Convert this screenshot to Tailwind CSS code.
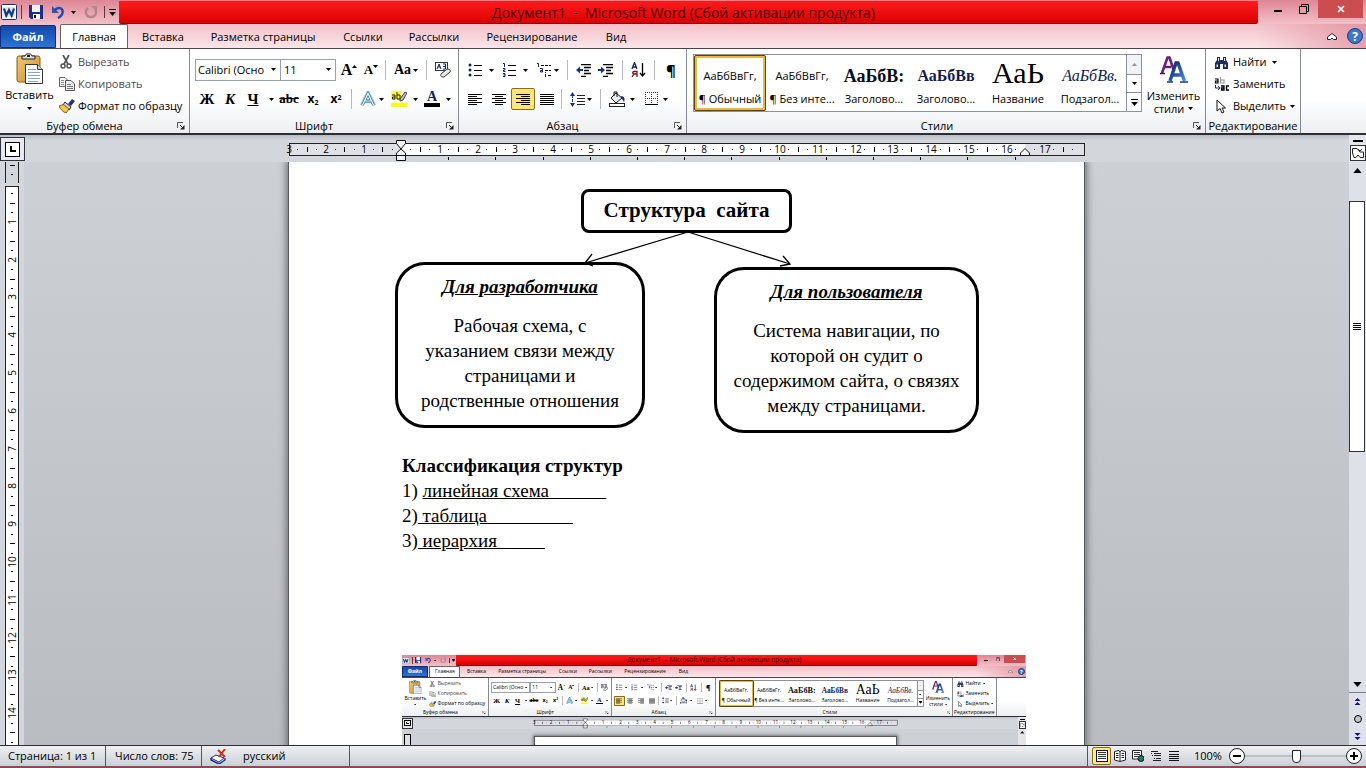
<!DOCTYPE html>
<html lang="ru">
<head>
<meta charset="utf-8">
<title>Документ1 - Microsoft Word</title>
<script src="https://cdn.jsdelivr.net/npm/@tailwindcss/browser@4"></script>
</head>
<body class="flex h-screen flex-col overflow-hidden bg-[#cdd0d4] font-['Open_Sans','Noto_Sans',sans-serif] text-[11px] leading-4 text-black">

<svg width="0" height="0" class="absolute" aria-hidden="true">
  <defs>
    <linearGradient id="gBlue" x1="0" y1="0" x2="1" y2="1"><stop offset="0" stop-color="#0b1f5c"/><stop offset="1" stop-color="#4a8be0"/></linearGradient>
    <linearGradient id="gGold" x1="0" y1="0" x2="1" y2="1"><stop offset="0" stop-color="#f0c877"/><stop offset="1" stop-color="#c98f35"/></linearGradient>
    <symbol id="dd" viewBox="0 0 5 3"><path d="M0 0H5L2.500 3Z" fill="#000"/></symbol>
    <symbol id="launch" viewBox="0 0 8 8"><path d="M.5 6V.5H6" fill="none" stroke="#555"/><path d="M3 3L6 6" stroke="#222"/><path d="M7.500 3V7.500H3Z" fill="#222"/></symbol>
    <symbol id="word" viewBox="0 0 16 16"><rect x=".5" y=".5" width="15" height="15" rx="1" fill="#fff" stroke="#14306e"/><path d="M2 3H14V13H2Z" fill="#dfe8f8"/><path d="M3 4.500L5.300 11.500L8 6L10.700 11.500L13 4.500" fill="none" stroke="#14387f" stroke-width="2.200"/></symbol>
    <symbol id="save" viewBox="0 0 14 14"><path d="M0 0H14V14H2L0 12Z" fill="#1c2f86"/><path d="M3 0H11V7H3Z" fill="#eef2ff"/><path d="M4 9H11V14H4Z" fill="#fff"/><path d="M5 10H7V13H5Z" fill="#111"/></symbol>
    <symbol id="undo" viewBox="0 0 14 14"><path d="M1 1V8H8L5 5Z" fill="#2d55b5"/><path d="M3.500 5.500C7 1 12.500 3 11.500 8C11 10 9 12 7 13" fill="none" stroke="#2449a8" stroke-width="2.400"/></symbol>
    <symbol id="redo" viewBox="0 0 14 14"><path d="M4 3C0 6 2 12 7 12C12 12 13 7 11 4" fill="none" stroke="#b0868e" stroke-width="2.400"/><path d="M7 1H13V7Z" fill="#b0868e"/></symbol>
    <symbol id="paste" viewBox="0 0 28 32"><rect x="1" y="3" width="23" height="26" rx="2" fill="url(#gGold)" stroke="#8a5d16"/><path d="M6 6V3H9C9 0 16 0 16 3H19V6Z" fill="#ddd" stroke="#222"/><rect x="11" y="2" width="3" height="2" fill="#222"/><path d="M9.500 11.500H21.500L26.500 16.500V30.500H9.500Z" fill="#fff" stroke="#333"/><path d="M21.500 11.500V16.500H26.500" fill="#cbd5e8" stroke="#333"/><path d="M12 16.500H20M12 19.500H24M12 22.500H24M12 25.500H24M12 28.500H22" stroke="#8ea0bf"/></symbol>
    <symbol id="cut" viewBox="0 0 14 14"><path d="M4 0L9 9M10 0L5 9" stroke="#555" stroke-width="1.700"/><circle cx="4" cy="11" r="2" fill="none" stroke="#555" stroke-width="1.500"/><circle cx="10" cy="11" r="2" fill="none" stroke="#555" stroke-width="1.500"/></symbol>
    <symbol id="copy" viewBox="0 0 16 14"><path d="M.5.5H6L9 3.500V9.500H.5Z" fill="#fff" stroke="#666"/><path d="M2 3.500H5M2 5.500H5M2 7.500H5" stroke="#888"/><path d="M6.500 3.500H12L15.500 7V13.500H6.500Z" fill="#eee" stroke="#555"/><path d="M8 7.500H12M8 9.500H14M8 11.500H14" stroke="#777"/></symbol>
    <symbol id="brush" viewBox="0 0 16 14"><path d="M9 5L13 0L16 2L12 7Z" fill="#24346e"/><path d="M6 3L12 8L10 11L4 6Z" fill="#cfd3da" stroke="#222"/><path d="M0 7L4.500 5.500L10 10L7 14C4 13 1 10 0 7Z" fill="#f3c64c" stroke="#5a4209" stroke-width=".8"/></symbol>
    <symbol id="bullets" viewBox="0 0 15 14"><g fill="#10205a"><circle cx="2" cy="2" r="1.500"/><circle cx="2" cy="7" r="1.500"/><circle cx="2" cy="12" r="1.500"/></g><path d="M6 2.500H14M6 7.500H14M6 12.500H14" stroke="#000"/></symbol>
    <symbol id="nums" viewBox="0 0 15 14"><g fill="none" stroke="#10205a"><path d="M1 .5H2.500V4M1 5.500H3V7H1.500V8.500H3.500M1 10.500H3V13.500H1M1.500 12H3"/></g><path d="M6 2.500H14M6 7.500H14M6 12.500H14" stroke="#000"/></symbol>
    <symbol id="multi" viewBox="0 0 16 14"><path d="M1 .5H2.500V4M4 5.500H6.500V9M6.500 7.500H4.500V9H6.500M9.500 9V10M9.500 11V14" fill="none" stroke="#10205a"/><path d="M5 2.500H15M9 7.500H15M12 12.500H15" stroke="#000" stroke-dasharray="3 1"/></symbol>
    <symbol id="dedent" viewBox="0 0 16 13"><path d="M5 .5H15M8 3.500H15M8 6.500H13M8 9.500H15M5 12.500H10" stroke="#000" stroke-width="1.400"/><path d="M0 6L4 2.500V5H7V7H4V9.500Z" fill="#1b2f83"/></symbol>
    <symbol id="indent" viewBox="0 0 16 13"><path d="M5 .5H15M8 3.500H15M8 6.500H13M8 9.500H15M5 12.500H10" stroke="#000" stroke-width="1.400"/><path d="M7 6L3 2.500V5H0V7H3V9.500Z" fill="#1b2f83"/></symbol>
    <symbol id="sort" viewBox="0 0 15 16"><path d="M1 7L3.500 0.500L6 7M2 5H5" fill="none" stroke="#10205a" stroke-width="1.300"/><path d="M6 15V9.500H3C1 10 1.500 12 3 12H6M3 12L1 15" fill="none" stroke="#6b1414" stroke-width="1.300"/><path d="M11.500 1V14M9 11L11.500 14L14 11" fill="none" stroke="#000" stroke-width="1.300"/></symbol>
    <symbol id="left" viewBox="0 0 14 13"><path d="M0 1.500H14M0 3.500H9M0 5.500H14M0 7.500H9M0 9.500H14M0 11.500H9" stroke="#000"/></symbol>
    <symbol id="center" viewBox="0 0 14 13"><path d="M0 1.500H14M3 3.500H11M0 5.500H14M3 7.500H11M0 9.500H14M3 11.500H11" stroke="#000"/></symbol>
    <symbol id="right" viewBox="0 0 14 13"><path d="M0 1.500H14M5 3.500H14M0 5.500H14M5 7.500H14M0 9.500H14M5 11.500H14" stroke="#000"/></symbol>
    <symbol id="just" viewBox="0 0 14 13"><path d="M0 1.500H14M0 3.500H14M0 5.500H14M0 7.500H14M0 9.500H14M0 11.500H14" stroke="#000"/></symbol>
    <symbol id="spacing" viewBox="0 0 15 15"><path d="M0 4L2.500 0L5 4ZM0 11L2.500 15L5 11Z" fill="#1b2f83"/><path d="M2.500 3V12" stroke="#1b2f83" stroke-dasharray="3 1"/><path d="M7 3.500H15M7 6.500H15M7 9.500H15M7 12.500H15" stroke="#222"/></symbol>
    <symbol id="fill" viewBox="0 0 16 16"><path d="M7 2L13 7L7 12L2 7Z" fill="#e8ecf5" stroke="#111"/><path d="M5 5V1H8V6" fill="none" stroke="#111"/><path d="M12 5C16 5 16 9 15 11L13 8Z" fill="#1b2f83"/><rect x=".5" y="12.500" width="15" height="3" fill="#fff" stroke="#222"/></symbol>
    <symbol id="borders" viewBox="0 0 14 14"><path d="M.5 0V12M6.500 0V12M12.500 0V12M0 .5H13M0 6.500H13" stroke="#333" stroke-dasharray="1 1"/><path d="M0 12.500H13" stroke="#000"/></symbol>
    <symbol id="eraser" viewBox="0 0 16 16"><rect x=".5" y=".5" width="12" height="8" fill="#fff" stroke="#333"/><path d="M2 7L4 2L6 7M3 5H5M8 2H10.500V7H8M8 4.500H10.500" fill="none" stroke="#10205a"/><path d="M6 12L12 7C15 7 16 9 15 10L9 15C6 15 5 14 6 12Z" fill="#e7ebf5" stroke="#333"/></symbol>
    <symbol id="glowA" viewBox="0 0 16 15"><path d="M1.500 14L8 1L14.500 14M4.500 10H11.500" fill="none" stroke="#a9d0e6" stroke-width="3.600"/><path d="M2.500 13.500L8 2L13.500 13.500M5 9.500H11" fill="none" stroke="#2f6f9f" stroke-width="2.800"/><path d="M2.500 13.500L8 2L13.500 13.500M5 9.500H11" fill="none" stroke="#fff" stroke-width="1.200"/></symbol>
    <symbol id="marker" viewBox="0 0 16 16"><rect x="0" y="0" width="10" height="9" fill="#ffff40"/><path d="M1 4H4V8H1.500V6H4M6 1V8H9V4H6" fill="none" stroke="#222"/><path d="M9 8L14 1L16 2L12 9L9 10Z" fill="#b9bfce" stroke="#222" stroke-width=".8"/><rect x="0" y="12" width="16" height="4" fill="#ff0"/></symbol>
    <symbol id="styles" viewBox="0 0 28 27"><path d="M2 17L7.500 1.500H9.500L14 15M4 11H11" fill="none" stroke="#6b1e78" stroke-width="2.600"/><path d="M0 17.500H5" stroke="#4a1054" stroke-width="1.500"/><path d="M10 25L16 7H18L24.500 25M12 19H21" fill="none" stroke="url(#gBlue)" stroke-width="3.400"/><path d="M7 26H13M20 26H28" stroke="#163b80" stroke-width="1.500"/></symbol>
    <symbol id="find" viewBox="0 0 15 13"><path d="M3 1H6V4H9V1H12V4L14 7V13H9V8H6V13H1V7L3 4Z" fill="#1d2c5a"/><path d="M4 2H5V5H4ZM10 2H11V5H10ZM2.500 8.500H4V11H2.500ZM10.500 8.500H12V11H10.500Z" fill="#dfe6f5"/></symbol>
    <symbol id="replace" viewBox="0 0 16 14"><path d="M1 2H4V6H1.500V4H4" fill="none" stroke="#000" stroke-width="1.200"/><path d="M6.500 0V6H10V3H7" fill="none" stroke="#999" stroke-width="1.200"/><path d="M1.500 8V11H5M4 9L6 11L4 13" fill="none" stroke="#1b2f83"/><path d="M7 9H10V13H7.500V11H10M15 9H12.500V13H15" fill="none" stroke="#000" stroke-width="1.300"/></symbol>
    <symbol id="cursor" viewBox="0 0 10 15"><path d="M1 1V12L4 9.500L6 14L8 13L6 9H9.500Z" fill="#fff" stroke="#111"/></symbol>
    <symbol id="viewPrint" viewBox="0 0 12 12"><rect x=".5" y=".5" width="11" height="11" fill="#fff" stroke="#111"/><path d="M2 2.500H10M2 4.500H10M2 6.500H10M2 8.500H10" stroke="#333"/></symbol>
    <symbol id="viewRead" viewBox="0 0 12 12"><path d="M.5 1.500L5 .5L6 2L7 .5L11.500 1.500V10L6 11.500L.5 10Z" fill="#fff" stroke="#222"/><path d="M6 2V11M2 3.500H4.500M2 5.500H4.500M2 7.500H4.500M7.500 3.500H10M7.500 5.500H10M7.500 7.500H10" stroke="#222"/></symbol>
    <symbol id="viewWeb" viewBox="0 0 12 12"><path d="M.5.5H9.500V9H.5Z" fill="#fff" stroke="#222"/><path d="M2 2.500H8M2 4.500H8M2 6.500H6" stroke="#333"/><circle cx="9" cy="8.500" r="3" fill="#1c7a74" stroke="#111"/></symbol>
    <symbol id="viewOutline" viewBox="0 0 12 12"><path d="M1 1.500H8M4 3.500H11M4 5.500H11M6 8.500H11M3 10.500H11" stroke="#222"/><path d="M1 3.500H2M2 5.500H3M4 8.500H5" stroke="#222"/></symbol>
    <symbol id="viewDraft" viewBox="0 0 12 12"><path d="M1 1.500H11M1 4.500H11M1 6.500H11M1 8.500H11M1 10.500H11" stroke="#111"/></symbol>
    <symbol id="proof" viewBox="0 0 17 15"><path d="M1 9L6 6L14 9L9 13Z" fill="#fff" stroke="#1b2f83"/><path d="M1 9V11L9 15L15 11V9" fill="none" stroke="#1b2f83" stroke-width="1.400"/><path d="M8 1L15 8M15 0L9 8" stroke="#c5331f" stroke-width="2"/></symbol>
  </defs>
</svg>

<!-- Window frame, tabs and ribbon -->
<div id="chrome" class="flex-none">
  <header class="bg-linear-to-b from-[#dd8695] via-[#f3c0c8] to-[#fbe6e9]">
    <div class="flex h-6 items-start">
      <div class="flex h-6 w-[119px] flex-none items-center pl-px">
        <svg class="h-4 w-4"><use href="#word"/></svg>
        <i class="mx-1 h-3.5 w-px bg-[#5a3a40]"></i>
        <button aria-label="Сохранить" class="ml-[3px]"><svg class="h-3.5 w-3.5"><use href="#save"/></svg></button>
        <button aria-label="Отменить" class="ml-2"><svg class="h-3.5 w-3.5"><use href="#undo"/></svg></button>
        <button aria-label="Список отмены" class="ml-1.5"><svg class="h-[3px] w-[5px]"><use href="#dd"/></svg></button>
        <button aria-label="Повторить" class="ml-2"><svg class="h-3.5 w-3.5"><use href="#redo"/></svg></button>
        <i class="ml-1.5 h-3 w-px bg-[#5a3a40]"></i>
        <button aria-label="Настройка панели" class="ml-1 flex flex-col items-center gap-0.5"><i class="h-px w-[7px] bg-black"></i><svg class="h-1 w-[7px]"><use href="#dd"/></svg></button>
      </div>
      <h1 class="mt-px h-[23px] flex-1 rounded-b-xs border-b border-[#7a1010] bg-linear-to-b from-[#ff1a1a] to-[#da0000] pr-2.5 text-center text-[14px] leading-6 text-[#4c0000]">Документ1&nbsp; -&nbsp; Microsoft Word (Сбой активации продукта)</h1>
      <div class="flex h-[18px] w-[108px] flex-none">
        <button aria-label="Свернуть" class="grid w-8 place-items-center pt-1 pl-2"><i class="h-0.5 w-2 bg-black"></i></button>
        <button aria-label="Восстановить" class="grid w-[28px] place-items-center"><svg class="h-2.5 w-2.5" viewBox="0 0 10 10"><path d="M.5 2.500H7.500V9.500H.5ZM2.500 2V.5H9.500V7.500H8" fill="none" stroke="#000"/></svg></button>
        <button aria-label="Закрыть" class="grid flex-1 place-items-center bg-[#cc4d50]"><svg class="h-2 w-2" viewBox="0 0 8 8"><path d="M1 1L7 7M7 1L1 7" stroke="#fff" stroke-width="1.700"/></svg></button>
        <i class="w-[3px]"></i>
      </div>
    </div>
    <nav class="flex h-6 items-end bg-linear-to-r from-transparent from-92% to-[#dd8695]/70">
      <button class="h-[23px] w-14 rounded-t-xs border border-[#0c2d78] bg-linear-to-b from-[#164aa8] via-[#1d5cc0] to-[#2f74d8] text-center font-bold text-white">Файл</button>
      <button class="relative z-10 ml-1 h-6 w-[68px] rounded-t-xs border border-b-0 border-[#6d6065] bg-white text-center">Главная</button>
      <button class="h-[23px] w-[70px]">Вставка</button>
      <button class="h-[23px] w-[130px]">Разметка страницы</button>
      <button class="h-[23px] w-[70px]">Ссылки</button>
      <button class="h-[23px] w-[72px]">Рассылки</button>
      <button class="h-[23px] w-[124px]">Рецензирование</button>
      <button class="h-[23px] w-11">Вид</button>
      <div class="ml-auto flex h-6 items-center gap-2.5 pr-[3px]">
        <button aria-label="Свернуть ленту"><svg class="h-[7px] w-2.5" viewBox="0 0 10 7"><path d="M.5 4L5 .5L9.500 4V6.500H6.500L5 5L3.500 6.500H.5Z" fill="#fff" stroke="#222"/></svg></button>
        <button aria-label="Справка" class="grid h-4 w-4 place-items-center rounded-full border border-[#123f86] bg-[#3b78cc] text-[12px] font-bold text-white">?</button>
      </div>
    </nav>
  </header>

  <div class="flex h-[87px] border-t border-b-2 border-t-[#4b4347] border-b-[#2c2e35] bg-linear-to-b from-white via-white via-60% to-[#eceef1]">
    <!-- Буфер обмена -->
    <section class="flex w-[190px] flex-none flex-col border-r border-[#858a92]">
      <div class="flex h-[70px]">
        <button class="flex w-[59px] flex-none flex-col items-center pt-1">
          <svg class="h-8 w-7"><use href="#paste"/></svg>
          <span class="mt-0.5 leading-4">Вставить</span>
          <svg class="mt-1 h-[3px] w-[5px]"><use href="#dd"/></svg>
        </button>
        <div class="flex flex-col pt-0.5 whitespace-nowrap">
          <button class="flex h-[22px] items-center gap-[5px] text-[#4b4b50]"><svg class="h-3.5 w-3.5"><use href="#cut"/></svg>Вырезать</button>
          <button class="flex h-[22px] items-center gap-[3px] text-[#4b4b50]"><svg class="h-3.5 w-4"><use href="#copy"/></svg>Копировать</button>
          <button class="flex h-[22px] items-center gap-[3px]"><svg class="h-3.5 w-4"><use href="#brush"/></svg>Формат по образцу</button>
        </div>
      </div>
      <div class="flex h-[14px] items-center pr-1"><span class="flex-1 pr-2 text-center">Буфер обмена</span><button aria-label="Параметры буфера обмена"><svg class="h-2 w-2"><use href="#launch"/></svg></button></div>
    </section>
    <!-- Шрифт -->
    <section class="flex w-[269px] flex-none flex-col border-r border-[#858a92]">
      <div class="flex h-[70px] flex-col gap-[7px] pt-2.5 pl-[5px]">
        <div class="flex h-[22px] items-center">
          <div class="relative h-[22px] w-[86px] border border-[#9aa0a8] bg-white"><select aria-label="Шрифт" class="h-5 w-[70px] appearance-none overflow-hidden pl-0.5 whitespace-nowrap outline-none"><option>Calibri (Осно</option></select><svg class="pointer-events-none absolute top-2 right-1 h-[3px] w-[5px]"><use href="#dd"/></svg></div>
          <div class="relative -ml-px h-[22px] w-[56px] border border-[#9aa0a8] bg-white"><select aria-label="Размер шрифта" class="h-5 w-full appearance-none pl-[3px] outline-none"><option>11</option></select><svg class="pointer-events-none absolute top-2 right-1 h-[3px] w-[5px]"><use href="#dd"/></svg></div>
          <button aria-label="Увеличить размер" class="ml-[3px] flex w-5 items-center justify-center font-['Liberation_Serif',serif] text-[16px] font-bold">A<svg class="mb-2 h-[3px] w-[5px] rotate-180"><use href="#dd"/></svg></button>
          <button aria-label="Уменьшить размер" class="ml-0.5 flex w-5 items-center justify-center font-['Liberation_Serif',serif] text-[13px] font-bold">A<svg class="mb-2 h-[3px] w-[5px]"><use href="#dd"/></svg></button>
          <i class="ml-1 h-5 w-px bg-[#b6bac0]"></i>
          <button aria-label="Регистр" class="ml-2 flex items-center gap-0.5 font-['Liberation_Serif',serif] text-[14px] font-bold">Aa<svg class="h-[3px] w-[5px]"><use href="#dd"/></svg></button>
          <i class="ml-2 h-5 w-px bg-[#b6bac0]"></i>
          <button aria-label="Очистить формат" class="ml-2"><svg class="h-4 w-4"><use href="#eraser"/></svg></button>
        </div>
        <div class="flex h-[22px] items-center font-['Liberation_Serif',serif] text-[15px] font-bold">
          <button class="w-6">Ж</button>
          <button class="w-[22px] italic">К</button>
          <button class="w-6 underline">Ч</button>
          <button aria-label="Вид подчёркивания" class="grid w-3 place-items-center"><svg class="h-[3px] w-[5px]"><use href="#dd"/></svg></button>
          <button class="w-6 text-[13px] line-through">abc</button>
          <button class="w-6 font-['Open_Sans',sans-serif] text-[12px]">x<sub class="text-[7px]">2</sub></button>
          <button class="w-[22px] font-['Open_Sans',sans-serif] text-[12px]">x<sup class="text-[7px]">2</sup></button>
          <i class="mx-1 h-5 w-px bg-[#b6bac0]"></i>
          <button aria-label="Эффекты текста" class="ml-1 flex items-center gap-[3px]"><svg class="h-4 w-4"><use href="#glowA"/></svg><svg class="h-[3px] w-[5px]"><use href="#dd"/></svg></button>
          <button aria-label="Выделение цветом" class="ml-[7px] flex items-center gap-1.5"><svg class="h-4 w-4"><use href="#marker"/></svg><svg class="h-[3px] w-[5px]"><use href="#dd"/></svg></button>
          <button aria-label="Цвет текста" class="ml-1.5 flex items-center gap-1.5"><span class="flex h-4 w-4 items-center justify-center border-b-4 border-black text-[14px] leading-3 text-[#10205a]">A</span><svg class="h-[3px] w-[5px]"><use href="#dd"/></svg></button>
        </div>
      </div>
      <div class="flex h-[14px] items-center pr-1"><span class="flex-1 pr-2 text-center">Шрифт</span><button aria-label="Параметры шрифта"><svg class="h-2 w-2"><use href="#launch"/></svg></button></div>
    </section>
    <!-- Абзац -->
    <section class="flex w-[228px] flex-none flex-col border-r border-[#858a92]">
      <div class="flex h-[70px] flex-col gap-[7px] pt-2.5 pl-1">
        <div class="flex h-[22px] items-center pl-[5px]">
          <button aria-label="Маркеры" class="flex items-center gap-1.5"><svg class="h-3.5 w-[15px]"><use href="#bullets"/></svg><svg class="h-[3px] w-[5px]"><use href="#dd"/></svg></button>
          <button aria-label="Нумерация" class="ml-2 flex items-center gap-1.5"><svg class="h-3.5 w-[15px]"><use href="#nums"/></svg><svg class="h-[3px] w-[5px]"><use href="#dd"/></svg></button>
          <button aria-label="Многоуровневый список" class="ml-2 flex items-center gap-0.5"><svg class="h-3.5 w-4"><use href="#multi"/></svg><svg class="h-[3px] w-[5px]"><use href="#dd"/></svg></button>
          <i class="ml-2 h-5 w-px bg-[#b6bac0]"></i>
          <button aria-label="Уменьшить отступ" class="ml-2"><svg class="h-[13px] w-4"><use href="#dedent"/></svg></button>
          <button aria-label="Увеличить отступ" class="ml-1.5"><svg class="h-[13px] w-4"><use href="#indent"/></svg></button>
          <i class="ml-2 h-5 w-px bg-[#b6bac0]"></i>
          <button aria-label="Сортировка" class="ml-2"><svg class="h-4 w-[15px]"><use href="#sort"/></svg></button>
          <i class="ml-2 h-5 w-px bg-[#b6bac0]"></i>
          <button class="ml-[11px] text-[15px] font-bold">¶</button>
        </div>
        <div class="flex h-[22px] items-center">
          <button data-align="left" aria-label="По левому краю" class="grid h-[22px] w-6 place-items-center"><svg class="h-[13px] w-3.5"><use href="#left"/></svg></button>
          <button aria-label="По центру" class="grid h-[22px] w-6 place-items-center"><svg class="h-[13px] w-3.5"><use href="#center"/></svg></button>
          <button data-align="right" aria-label="По правому краю" class="grid h-[22px] w-6 place-items-center rounded-xs border border-[#8a6a1c] bg-[#ffe678]"><svg class="h-[13px] w-3.5"><use href="#right"/></svg></button>
          <button aria-label="По ширине" class="grid h-[22px] w-6 place-items-center"><svg class="h-[13px] w-3.5"><use href="#just"/></svg></button>
          <i class="ml-0.5 h-5 w-px bg-[#b6bac0]"></i>
          <button aria-label="Интервал" class="ml-2 flex items-center gap-0.5"><svg class="h-[15px] w-[15px]"><use href="#spacing"/></svg><svg class="h-[3px] w-[5px]"><use href="#dd"/></svg></button>
          <i class="ml-2 h-5 w-px bg-[#b6bac0]"></i>
          <button aria-label="Заливка" class="ml-2 flex items-center gap-[5px]"><svg class="h-4 w-4"><use href="#fill"/></svg><svg class="h-[3px] w-[5px]"><use href="#dd"/></svg></button>
          <button aria-label="Границы" class="ml-2.5 flex items-center gap-1"><svg class="h-3.5 w-3.5"><use href="#borders"/></svg><svg class="h-[3px] w-[5px]"><use href="#dd"/></svg></button>
        </div>
      </div>
      <div class="flex h-[14px] items-center pr-1"><span class="flex-1 pr-2 text-center">Абзац</span><button aria-label="Параметры абзаца"><svg class="h-2 w-2"><use href="#launch"/></svg></button></div>
    </section>
    <!-- Стили -->
    <section class="flex w-[519px] flex-none flex-col border-r border-[#858a92]">
      <div class="flex h-[70px]">
        <div class="mt-[5px] ml-1.5 flex h-[58px] w-[449px] flex-none border border-[#8d929a] bg-white">
          <button class="flex w-[72px] flex-col items-center justify-between overflow-hidden rounded-xs border-3 border-[#e9b93c] pt-2.5 pb-px whitespace-nowrap outline-1 -outline-offset-1 outline-[#5e4212]"><span>АаБбВвГг,</span><span>¶ Обычный</span></button>
          <button class="flex w-[72px] flex-col items-center justify-between overflow-hidden px-1 pt-[13px] pb-1 whitespace-nowrap"><span>АаБбВвГг,</span><span>¶ Без инте...</span></button>
          <button class="flex w-[72px] flex-col items-center justify-between overflow-hidden px-1 pt-[13px] pb-1 whitespace-nowrap"><span class="font-['Liberation_Serif',serif] text-[18px] font-bold text-[#0a0d18]">АаБбВ:</span><span>Заголово...</span></button>
          <button class="flex w-[72px] flex-col items-center justify-between overflow-hidden px-1 pt-[13px] pb-1 whitespace-nowrap"><span class="font-['Liberation_Serif',serif] text-[16px] font-bold text-[#141c52]">АаБбВв</span><span>Заголово...</span></button>
          <button class="flex w-[72px] flex-col items-center justify-between overflow-hidden px-1 pt-2 pb-1 whitespace-nowrap"><span class="font-['Liberation_Serif',serif] text-[30px] leading-5">АаЬ</span><span>Название</span></button>
          <button class="flex w-[72px] flex-col items-center justify-between overflow-hidden px-1 pt-[13px] pb-1 whitespace-nowrap"><span class="font-['Liberation_Serif',serif] text-[16px] text-[#141c52] italic">АаБбВв.</span><span>Подзагол...</span></button>
          <div class="flex flex-1 flex-col border-l border-[#8d929a]">
            <button aria-label="Вверх" class="grid h-[19px] place-items-center bg-[#f2f3f5]"><svg class="h-[3px] w-[5px] rotate-180 opacity-40"><use href="#dd"/></svg></button>
            <button aria-label="Вниз" class="grid h-[19px] place-items-center border-y border-[#8d929a]"><svg class="h-[3px] w-[5px]"><use href="#dd"/></svg></button>
            <button aria-label="Ещё стили" class="flex flex-1 flex-col items-center justify-center gap-0.5"><i class="h-px w-[7px] bg-black"></i><svg class="h-1 w-[7px]"><use href="#dd"/></svg></button>
          </div>
        </div>
        <button class="flex flex-1 flex-col items-center pt-[7px] leading-[13px]"><svg class="h-[27px] w-7"><use href="#styles"/></svg><span class="mt-1.5">Изменить</span><span class="flex items-center gap-1">стили<svg class="h-[3px] w-[5px]"><use href="#dd"/></svg></span></button>
      </div>
      <div class="flex h-[14px] items-center pr-1"><span class="flex-1 pr-1.5 text-center">Стили</span><button aria-label="Параметры стилей"><svg class="h-2 w-2"><use href="#launch"/></svg></button></div>
    </section>
    <!-- Редактирование -->
    <section class="flex w-[95px] flex-none flex-col border-r border-[#858a92]">
      <div class="flex h-[70px] flex-col pt-0.5 pl-2 whitespace-nowrap">
        <button class="flex h-[22px] items-center gap-1"><svg class="h-[13px] w-[15px]"><use href="#find"/></svg>Найти<svg class="ml-0.5 h-[3px] w-[5px]"><use href="#dd"/></svg></button>
        <button class="flex h-[22px] items-center gap-[3px]"><svg class="h-3.5 w-4"><use href="#replace"/></svg>Заменить</button>
        <button class="flex h-[22px] items-center gap-[7px] pl-0.5"><svg class="h-[15px] w-2.5"><use href="#cursor"/></svg><span>Выделить</span><svg class="-ml-[3px] h-[3px] w-[5px]"><use href="#dd"/></svg></button>
      </div>
      <span class="text-center leading-[14px] whitespace-nowrap">Редактирование</span>
    </section>
  </div>

  <!-- Horizontal ruler -->
  <div class="flex h-[27px] bg-linear-to-b from-[#b9bcc2] via-[#d3d6db] via-20% to-[#d3d6db]">
    <button aria-label="Тип табуляции" class="mt-0.5 grid h-6 w-[25px] flex-none place-items-center border border-[#30333a] bg-[#e8e8f2]"><span class="grid h-[15px] w-[15px] place-items-center border border-black bg-white"><i class="h-1.5 w-1.5 border-b-2 border-l-2 border-black"></i></span></button>
    <div class="flex flex-1 justify-center pt-1.5"><svg data-hruler class="h-5 w-[800px] overflow-visible" viewBox="0 0 800 20" font-family="Open Sans" font-size="10"></svg></div>
    <div class="flex w-[17px] flex-none flex-col items-center bg-[#e4e6ea] pt-[5px]"><i class="h-0.5 w-2.5 bg-black"></i><button aria-label="Линейка" class="mt-[3px] grid h-4 w-4 place-items-center border border-[#30333a] bg-white"><svg class="h-2.5 w-3" viewBox="0 0 12 10"><path d="M.5.5H5L8 4H11.500V9.500H8L6 7L4 9.500H2L.5 5ZM6 1L8 3L10 1" fill="none" stroke="#222"/></svg></button></div>
  </div>
</div>

<!-- Work area -->
<main class="flex min-h-0 flex-1 bg-linear-to-b from-[#cdd0d4] to-[#b9bcc0]">
  <div class="w-6 flex-none overflow-hidden bg-[#d3d6db] pl-[5px]"><svg id="vruler" class="h-[700px] w-3.5" viewBox="0 0 14 700" font-family="Open Sans" font-size="10"></svg></div>
  <div class="flex min-w-0 flex-1 justify-center overflow-hidden">
    <article class="h-[900px] w-[797px] flex-none border-x border-[#55585e] bg-white px-[113px] font-['Liberation_Serif','Times_New_Roman',serif] text-[19px] leading-[25px] shadow-[0_0_7px_2px_#6f7277]">
      <div class="relative -mx-[113px] h-[291px]">
        <svg class="absolute top-0 left-0 h-[291px] w-[795px]" viewBox="0 0 795 291" fill="none" stroke="#000" stroke-width="1.300"><path d="M399 70L296 101M303 92L296 101L304 104M399 70L501 102M494 94L501 102L491 104"/></svg>
        <div class="absolute top-[27px] left-[292px] h-11 w-[211px] rounded-lg border-3 border-black bg-white text-center text-[21px] leading-[37px] font-bold whitespace-pre">Структура  сайта</div>
        <div class="absolute top-[100px] left-[106px] h-[166px] w-[250px] rounded-[30px] border-3 border-black pt-[9px] text-center"><h2 class="mb-3.5 font-bold italic underline">Для разработчика</h2>Рабочая схема, с<br>указанием связи между<br>страницами и<br>родственные отношения</div>
        <div class="absolute top-[105px] left-[425px] h-[166px] w-[265px] rounded-[30px] border-3 border-black pt-[9px] text-center"><h2 class="mb-3.5 font-bold italic underline">Для пользователя</h2>Система навигации, по<br>которой он судит о<br>содержимом сайта, о связях<br>между страницами.</div>
      </div>
      <h2 class="font-bold">Классификация структур</h2>
      <p>1) <u>линейная схема______</u></p>
      <p>2)<u> таблица_________</u></p>
      <p>3)<u> иерархия_____</u></p>
      <!-- Picture of the window, filled by the script below -->
      <div class="-mr-16 pt-[102px]">
        <div id="picture" inert class="w-[1366px] bg-[#cdd0d4] font-['Open_Sans','Noto_Sans',sans-serif] text-[11px] leading-4 [zoom:0.457]">
          <div id="pictureBody" class="flex h-[300px]">
            <div class="w-6 flex-none pt-3 pl-[5px]"><div class="h-full w-3.5 border border-black bg-[#dfe1e6]"></div></div>
            <div class="flex flex-1 justify-center pt-4"><div class="w-[795px] border border-[#55585e] bg-white shadow-[0_0_7px_2px_#6f7277]"></div></div>
            <div class="w-[17px] flex-none bg-[#e4e6ea] pt-1"><svg class="mx-auto h-1.5 w-2.5 rotate-180"><use href="#dd"/></svg><div class="mt-7 h-full border border-[#30333a] bg-white"></div></div>
          </div>
        </div>
      </div>
    </article>
  </div>
  <div class="flex w-[17px] flex-none flex-col items-center bg-[#dfe1e8]">
    <button aria-label="Прокрутить вверх" class="grid h-4 place-items-center"><svg class="h-[5px] w-[9px] rotate-180"><use href="#dd"/></svg></button>
    <div class="w-full flex-1 pt-[23px]"><div class="flex h-[251px] w-4 flex-col items-center justify-center gap-px border border-[#30333a] bg-white"><i class="h-px w-2 bg-black"></i><i class="h-px w-2 bg-black"></i><i class="h-px w-2 bg-black"></i><i class="h-px w-2 bg-black"></i></div></div>
    <button aria-label="Прокрутить вниз" class="grid h-4 w-full place-items-center border-b border-[#777b84]"><svg class="h-[5px] w-[9px]"><use href="#dd"/></svg></button>
    <button aria-label="Предыдущая страница" class="grid h-[18px] place-items-center"><svg class="h-2 w-[7px]" viewBox="0 0 7 8"><path d="M3.500 0L6.500 3H.5ZM3.500 4L6.500 7H.5Z" fill="#10108a"/></svg></button>
    <button aria-label="Выбор объекта" class="grid h-4 place-items-center"><i class="h-2 w-2 rounded-full border border-black bg-[#c4c8ce]"></i></button>
    <button aria-label="Следующая страница" class="grid h-[18px] place-items-center"><svg class="h-2 w-[7px]" viewBox="0 0 7 8"><path d="M3.500 4L6.500 1H.5ZM3.500 8L6.500 5H.5Z" fill="#10108a"/></svg></button>
  </div>
</main>

<footer class="flex h-[23px] flex-none items-center border-t border-b-2 border-t-[#2c2e35] border-b-[#8c4a58] bg-linear-to-b from-[#eef0f3] to-[#ccd0d5]">
  <button class="h-full w-[106px] border-r border-[#555] pr-1.5 pl-2 text-left whitespace-nowrap">Страница: 1 из 1</button>
  <button class="h-full w-24 border-r border-[#555] pl-[9px] text-left whitespace-nowrap">Число слов: 75</button>
  <button aria-label="Правописание" class="ml-2"><svg class="h-[15px] w-[17px]"><use href="#proof"/></svg></button>
  <button class="ml-4 h-full w-[107px] border-r border-[#555] text-left">русский</button>
  <div class="ml-auto flex h-full items-center border-l border-[#555] pr-1 pl-1">
    <button aria-label="Разметка страницы" class="grid h-[18px] w-[19px] place-items-center rounded-xs border border-[#8a6a1c] bg-[#ffe98a]"><svg class="h-3 w-3"><use href="#viewPrint"/></svg></button>
    <button aria-label="Режим чтения" class="ml-[3px]"><svg class="h-3 w-3"><use href="#viewRead"/></svg></button>
    <button aria-label="Веб-документ" class="ml-1.5"><svg class="h-3 w-3"><use href="#viewWeb"/></svg></button>
    <button aria-label="Структура" class="ml-1.5"><svg class="h-3 w-3"><use href="#viewOutline"/></svg></button>
    <button aria-label="Черновик" class="ml-1.5"><svg class="h-3 w-3"><use href="#viewDraft"/></svg></button>
    <button class="ml-3.5 w-[35px] text-left">100%</button>
    <button aria-label="Уменьшить" class="grid h-4 w-4 place-items-center rounded-full border border-[#222] bg-white"><i class="h-0.5 w-2 bg-black"></i></button>
    <input type="range" aria-label="Масштаб" min="0" max="100" value="51" class="h-4 w-[101px] appearance-none bg-linear-to-b from-transparent from-46% via-[#4a4e58] via-50% to-transparent to-54% [&::-webkit-slider-thumb]:h-[13px] [&::-webkit-slider-thumb]:w-[9px] [&::-webkit-slider-thumb]:appearance-none [&::-webkit-slider-thumb]:rounded-b-sm [&::-webkit-slider-thumb]:border [&::-webkit-slider-thumb]:border-[#222] [&::-webkit-slider-thumb]:bg-white">
    <button aria-label="Увеличить" class="grid h-4 w-4 place-items-center rounded-full border border-[#222] bg-white"><svg class="h-2 w-2" viewBox="0 0 8 8"><path d="M4 0V8M0 4H8" stroke="#000" stroke-width="2"/></svg></button>
  </div>
</footer>

<script>
  const CM = 37.8;

  // Horizontal scale: the text area runs from 0 to 16.5 cm, margins are shaded.
  function horizontalRuler(svg) {
    const zero = 114;
    let out = '<rect x="2.500" y="2.500" width="795" height="12" fill="#dfe1e6" stroke="#222"/>' +
              '<rect x="' + zero + '" y="3" width="624" height="11" fill="#fff"/>';
    for (let q = -12; q <= 71; q++) {
      const x = Math.round(zero + q * CM / 4), n = q / 4;
      if (q === 0 || q === 66) continue;
      if (Number.isInteger(n)) out += '<text x="' + (x + 1) + '" y="12" text-anchor="middle">' + Math.abs(n) + '</text>';
      else if (q % 2) out += '<rect x="' + x + '" y="8" width="1" height="1"/>';
      else out += '<rect x="' + x + '" y="6" width="1" height="5"/>';
    }
    for (let t = 1; t < 14; t++) out += '<rect x="' + Math.round(zero + t * 47.2) + '" y="16" width="1" height="3"/>';
    out += '<path d="M109.500 -.5H118.500V2.500L114 8L118.500 12V19.500H109.500V12L114 8L109.500 2.500ZM109.500 14.500H118.500" fill="#f3f3f3" stroke="#111"/>' +
           '<path d="M738 7.500L742.500 12V14.500H733.500V12Z" fill="#f3f3f3" stroke="#111"/>';
    svg.innerHTML = out;
  }

  // Vertical scale; numbers are turned to read upwards.
  function verticalRuler(svg) {
    const zero = 22;
    let out = '<path d="M.5 0V21M13.500 0V21" stroke="#222"/><rect x=".5" y="24.500" width="13" height="680" fill="#fff" stroke="#222"/>' +
              '<rect x="5" y="3" width="5" height="1"/><rect x="6" y="12" width="2" height="1"/>';
    for (let q = 1; q < 60; q++) {
      const y = Math.round(zero + q * CM / 4), n = q / 4;
      if (Number.isInteger(n)) out += '<text transform="translate(11 ' + y + ') rotate(-90)" text-anchor="middle">' + n + '</text>';
      else if (q % 2) out += '<rect x="6" y="' + y + '" width="2" height="1"/>';
      else out += '<rect x="5" y="' + y + '" width="5" height="1"/>';
    }
    svg.innerHTML = out;
  }

  horizontalRuler(document.querySelector('[data-hruler]'));
  verticalRuler(document.getElementById('vruler'));

  // The inserted picture shows the same window with left alignment switched on.
  const copy = document.getElementById('chrome').cloneNode(true);
  copy.removeAttribute('id');
  const left = copy.querySelector('[data-align=left]'), right = copy.querySelector('[data-align=right]');
  [left.className, right.className] = [right.className, left.className];
  document.getElementById('picture').insertBefore(copy, document.getElementById('pictureBody'));
</script>
</body>
</html>
